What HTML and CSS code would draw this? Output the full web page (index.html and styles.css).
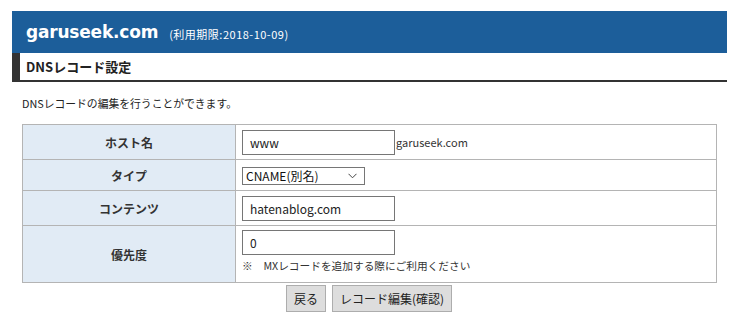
FILE: index.html
```html
<!DOCTYPE html>
<html lang="ja">
<head>
<meta charset="utf-8">
<link rel="stylesheet" href="styles.css">
</head>
<body>
<div class="wrap">
  <div class="banner">
    <span class="domain">garuseek.com</span>
    <span class="limit">(利用期限:2018-10-09)</span>
  </div>
  <h2 class="section">DNSレコード設定</h2>
  <p class="desc">DNSレコードの編集を行うことができます。</p>
  <table class="form">
    <tr class="r1">
      <th>ホスト名</th>
      <td><span class="field">www</span><span class="suffix">garuseek.com</span></td>
    </tr>
    <tr class="r2">
      <th>タイプ</th>
      <td>
        <span class="select">CNAME(別名)
          <svg class="chev" width="9" height="6" viewBox="0 0 9 6"><path d="M0.5 0.8 L4.5 4.8 L8.5 0.8" fill="none" stroke="#444" stroke-width="1"/></svg>
        </span>
      </td>
    </tr>
    <tr class="r3">
      <th>コンテンツ</th>
      <td><span class="field">hatenablog.com</span></td>
    </tr>
    <tr class="r4">
      <th>優先度</th>
      <td>
        <span class="field">0</span>
        <div class="note">※　MXレコードを追加する際にご利用ください</div>
      </td>
    </tr>
  </table>
  <div class="actions">
    <span class="btn">戻る</span>
    <span class="btn">レコード編集(確認)</span>
  </div>
</div>
</body>
</html>
```
FILE: styles.css
```css
html, body {
  margin: 0;
  padding: 0;
  background: #fff;
}
body {
  font-family: "Noto Sans CJK JP", "DejaVu Sans", sans-serif;
  color: #333;
  font-size: 12px;
}
.wrap {
  width: 715px;
  margin: 11px 0 0 12px;
}
.banner {
  background: #1c5e9a;
  height: 42px;
  display: flex;
  align-items: center;
  padding-left: 14px;
  box-sizing: border-box;
}
.domain {
  font-family: "DejaVu Sans", sans-serif;
  font-weight: bold;
  font-size: 17px;
  color: #fff;
  letter-spacing: -0.2px;
}
.limit {
  color: #fff;
  font-size: 11px;
  letter-spacing: 0.5px;
  margin-left: 11px;
  margin-top: 3px;
}
.section {
  margin: 0;
  height: 29px;
  box-sizing: border-box;
  border-left: 8px solid #333;
  border-bottom: 2px solid #333;
  padding-left: 6px;
  font-size: 13px;
  font-weight: bold;
  color: #222;
  display: flex;
  align-items: center;
}
.desc {
  margin: 13px 0 0 10px;
  font-size: 10.8px;
  line-height: 16px;
  color: #222;
}
.form {
  margin: 13px 0 0 10px;
  width: 695px;
  border-collapse: collapse;
}
.form th, .form td {
  border: 1px solid #b4b4b4;
  padding: 0;
}
.form th {
  width: 212px;
  background: #e1ebf5;
  font-size: 12px;
  font-weight: bold;
  color: #333;
  text-align: center;
}
.form td {
  padding-left: 6px;
  vertical-align: middle;
}
.r1 { height: 35px; }
.r2 { height: 31px; }
.r3 { height: 35px; }
.r4 { height: 57px; }
.r4 td { vertical-align: top; padding-top: 4px; }
.field {
  display: inline-flex;
  align-items: center;
  box-sizing: border-box;
  width: 153px;
  height: 25px;
  border: 1px solid #767676;
  padding-left: 7px;
  font-size: 12px;
  color: #222;
  vertical-align: middle;
}
.suffix {
  font-size: 11px;
  color: #333;
  vertical-align: middle;
  margin-left: 1px;
}
.select {
  display: inline-flex;
  align-items: center;
  justify-content: space-between;
  box-sizing: border-box;
  width: 123px;
  height: 18px;
  border: 1px solid #767676;
  padding: 0 7px 0 3px;
  font-size: 12px;
  color: #111;
  vertical-align: middle;
}
.note {
  margin-top: 3px;
  font-size: 10.7px;
  color: #333;
}
.actions {
  display: flex;
  justify-content: center;
  gap: 6px;
  margin: 2px 0 0 -1px;
}
.btn {
  display: inline-flex;
  align-items: center;
  justify-content: center;
  box-sizing: border-box;
  height: 27px;
  padding: 0 7px;
  background: #dddddd;
  border: 1px solid #adadad;
  font-size: 12px;
  color: #222;
}
```
